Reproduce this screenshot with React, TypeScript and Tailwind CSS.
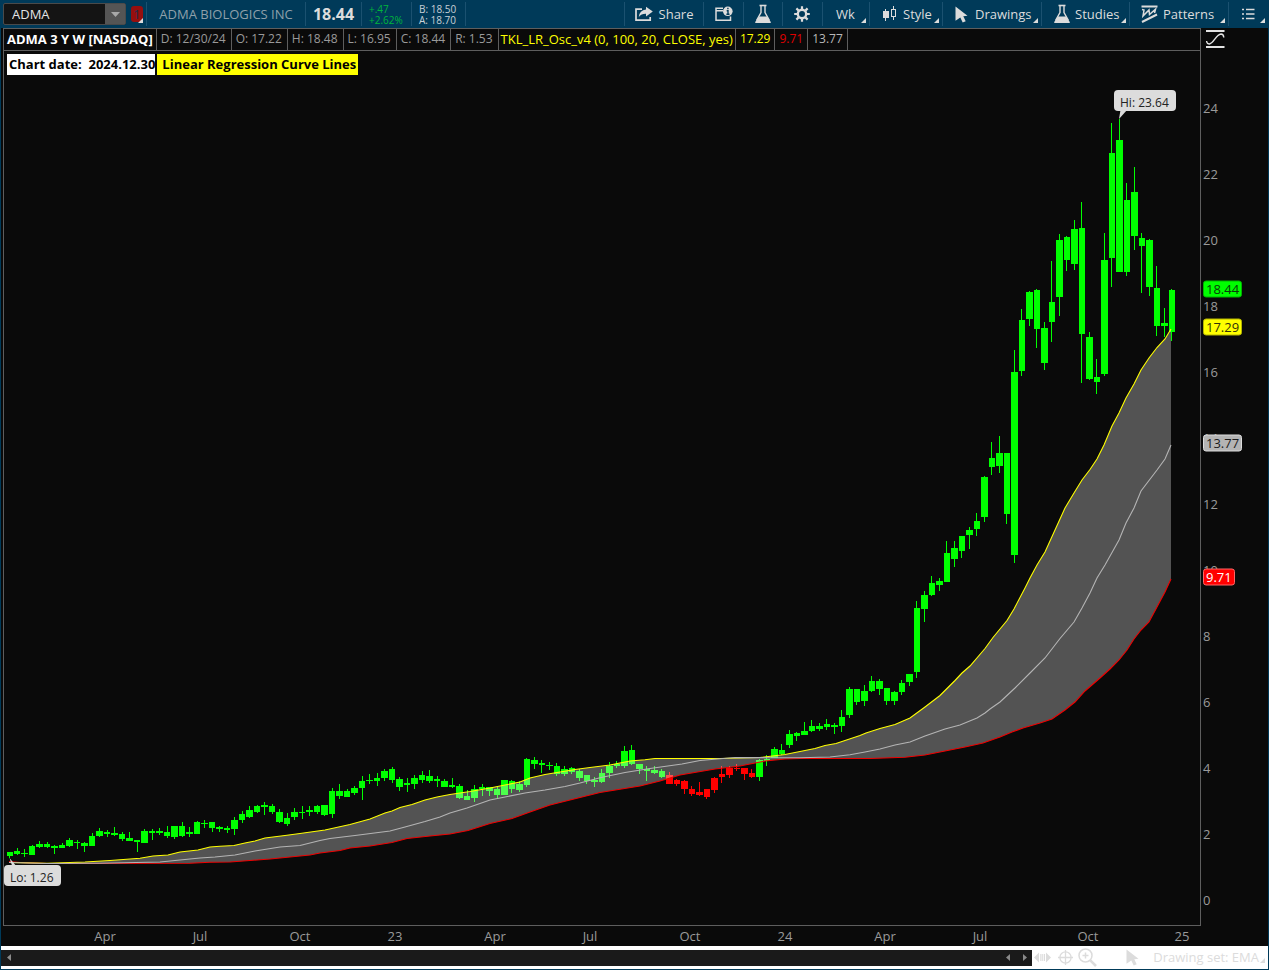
import type { ReactNode } from "react";

type Candle = [high: number, top: number, bottom: number, low: number];
type Point = [x: number, y: number];

/* Plot area in chart units: the svg scales it to whatever room it gets. */
const PLOT = { x: 4, y: 51, width: 1196, height: 874 };
const left = (x: number) => `${((x - PLOT.x) / PLOT.width) * 100}%`;
const top = (y: number) => `${((y - PLOT.y) / PLOT.height) * 100}%`;
const priceY = (price: number) => 900 - price * 33;

const candles: Candle[] = [
  [852, 852, 856, 858], [848, 851, 854, 855], [849, 853, 854, 857], [845, 846, 855, 855],
  [841, 844, 847, 848], [842, 844, 847, 848], [845, 846, 848, 854], [843, 845, 848, 848],
  [838, 840, 846, 847], [840, 842, 843, 849], [842, 843, 846, 852], [833, 836, 846, 846],
  [828, 831, 836, 837], [830, 832, 834, 837], [827, 833, 835, 836], [832, 834, 839, 841],
  [832, 838, 841, 841], [840, 840, 842, 852], [829, 831, 843, 843], [829, 831, 833, 840],
  [828, 831, 833, 835], [826, 832, 836, 838], [826, 826, 837, 839], [822, 826, 836, 837],
  [827, 832, 834, 837], [821, 822, 834, 834], [820, 823, 824, 828], [822, 822, 828, 832],
  [826, 827, 829, 832], [826, 828, 830, 833], [817, 820, 829, 835], [811, 814, 820, 823],
  [806, 810, 817, 818], [805, 806, 812, 813], [802, 805, 807, 815], [804, 806, 812, 814],
  [809, 812, 822, 823], [813, 818, 824, 826], [808, 812, 817, 820], [806, 812, 813, 819],
  [806, 810, 812, 816], [805, 806, 812, 814], [805, 805, 815, 816], [788, 791, 814, 818],
  [784, 791, 796, 799], [789, 791, 797, 797], [786, 788, 793, 795], [776, 781, 788, 800],
  [774, 780, 781, 784], [773, 778, 781, 786], [769, 771, 778, 781], [767, 769, 780, 783],
  [777, 779, 787, 791], [778, 783, 785, 792], [775, 778, 784, 789], [771, 775, 780, 783],
  [770, 776, 781, 783], [776, 779, 781, 787], [779, 781, 787, 787], [778, 785, 787, 788],
  [784, 786, 798, 799], [790, 796, 800, 800], [785, 789, 798, 802], [784, 787, 789, 796],
  [787, 787, 791, 796], [787, 789, 795, 798], [780, 780, 795, 795], [780, 781, 789, 793],
  [781, 784, 790, 792], [758, 759, 785, 787], [757, 760, 764, 769], [760, 763, 765, 773],
  [762, 765, 766, 770], [763, 766, 774, 776], [766, 769, 774, 776], [767, 768, 772, 774],
  [769, 771, 778, 781], [775, 775, 781, 784], [777, 780, 782, 787], [769, 773, 782, 783],
  [762, 766, 773, 778], [761, 764, 766, 768], [746, 751, 766, 768], [745, 750, 764, 765],
  [764, 764, 769, 774], [766, 769, 771, 781], [766, 770, 773, 774], [769, 771, 777, 778],
  [772, 775, 784, 784], [779, 780, 784, 786], [780, 781, 789, 794], [786, 789, 794, 796],
  [782, 792, 795, 796], [789, 789, 797, 799], [777, 778, 790, 793], [766, 774, 777, 783],
  [766, 768, 775, 778], [764, 768, 769, 771], [768, 768, 774, 780], [769, 773, 777, 778],
  [759, 760, 777, 781], [755, 759, 761, 766], [747, 749, 758, 758], [744, 750, 754, 755],
  [730, 734, 745, 748], [732, 733, 736, 741], [722, 731, 735, 735], [720, 726, 731, 732],
  [723, 726, 729, 731], [719, 724, 727, 730], [723, 725, 727, 734], [710, 717, 726, 732],
  [687, 689, 715, 718], [689, 689, 702, 705], [685, 691, 701, 706], [676, 681, 691, 692],
  [679, 681, 689, 695], [688, 688, 701, 705], [691, 692, 701, 705], [680, 683, 692, 695],
  [674, 674, 682, 686], [601, 608, 672, 678], [591, 595, 609, 622], [576, 583, 595, 596],
  [578, 581, 585, 591], [541, 553, 582, 582], [541, 548, 559, 567], [536, 536, 551, 558],
  [527, 530, 535, 549], [513, 521, 529, 536], [476, 477, 517, 522], [442, 458, 467, 475],
  [436, 453, 466, 473], [453, 453, 514, 524], [350, 372, 555, 563], [309, 320, 371, 376],
  [291, 292, 319, 326], [289, 290, 329, 348], [322, 328, 363, 370], [261, 302, 322, 342],
  [234, 240, 297, 316], [236, 237, 260, 271], [220, 229, 264, 270], [202, 228, 334, 383],
  [332, 337, 379, 380], [359, 377, 382, 394], [233, 260, 374, 376], [123, 153, 258, 287],
  [119, 140, 272, 272], [183, 200, 272, 276], [167, 192, 236, 250], [233, 238, 246, 293],
  [239, 240, 287, 296], [266, 288, 326, 336], [308, 323, 326, 337], [289, 290, 332, 341],
];
const isRed = (i: number) => i >= 88 && i <= 99;
const SPACING = 7.497;

const upper: Point[] = [
  [9, 862.5], [47, 863.3], [85, 862], [110, 860.5], [140, 858.3], [153, 856], [168, 855], [180, 852],
  [198, 850], [210, 847], [220, 846.3], [234, 845.5], [245, 843], [255, 841], [265, 838], [285, 835.5],
  [300, 833.5], [325, 830], [350, 824.5], [370, 819], [385, 813], [392, 811], [400, 807.5], [412, 804.5],
  [425, 800], [437, 797], [450, 794.5], [470, 791.5], [490, 788], [505, 785], [520, 782], [530, 778],
  [545, 774.5], [560, 772], [575, 769.5], [590, 767.5], [610, 765], [630, 761], [645, 759.7], [655, 758.5],
  [720, 758.5], [760, 757.5], [785, 754.5], [800, 751.5], [815, 748.5], [825, 745.5], [836, 743.5],
  [845, 740.5], [860, 735.5], [866, 733], [880, 728.5], [895, 724.5], [910, 718], [925, 707], [940, 695.5],
  [955, 680.5], [962, 673], [970, 666], [985, 648.5], [993, 637.5], [1007, 620.5], [1014, 609], [1025, 588],
  [1030, 578], [1037, 565], [1045, 552], [1055, 530], [1065, 508], [1074, 493], [1082, 480], [1090, 469.5],
  [1097, 459], [1104, 445], [1112, 426], [1119, 413], [1126, 398], [1134, 384], [1141, 370], [1149, 358],
  [1157, 347.5], [1165, 339], [1171, 329],
];
const middle: Point[] = [
  [9, 862.5], [47, 863.5], [100, 863.2], [160, 862], [185, 859.5], [200, 858], [215, 857], [235, 855],
  [255, 851], [280, 847], [300, 845.5], [320, 840.5], [330, 838.5], [355, 835.5], [390, 831], [405, 827],
  [425, 821.5], [440, 817], [450, 813], [467, 808], [480, 803.5], [490, 800], [505, 797], [525, 793],
  [545, 790], [565, 786.5], [580, 783], [600, 777.8], [625, 772.5], [650, 768.5], [682, 764], [700, 760.5],
  [720, 758.8], [735, 757.5], [770, 757.7], [800, 757.7], [830, 757], [850, 754.7], [865, 752], [880, 749],
  [895, 745], [910, 742], [925, 736], [945, 729], [960, 725], [977, 718], [985, 713], [990, 709],
  [1000, 702], [1015, 688], [1030, 673], [1045, 658], [1060, 638.5], [1074, 622], [1082, 608], [1090, 593],
  [1097, 578], [1105, 565], [1119, 540], [1126, 523], [1134, 508], [1141, 491], [1157, 470], [1165, 459],
  [1171, 445],
];
const lower: Point[] = [
  [9, 861.5], [20, 862.5], [47, 863.5], [190, 863.3], [210, 862.3], [230, 862], [250, 860.5], [270, 859],
  [285, 857.5], [310, 855], [320, 853], [340, 850.5], [350, 848], [370, 846], [392, 842.5], [407, 838.5],
  [430, 836], [450, 834], [468, 830.5], [490, 823.5], [512, 818.5], [530, 812], [550, 805], [570, 800],
  [600, 792.5], [640, 786], [660, 781], [680, 775], [715, 769], [740, 766], [765, 761], [785, 759],
  [800, 758.5], [870, 758.5], [905, 757.3], [925, 755], [945, 751], [965, 747], [983, 743], [1000, 737],
  [1012, 732], [1023, 728], [1040, 723], [1052, 719], [1065, 710], [1075, 702], [1085, 691], [1100, 678],
  [1110, 669], [1119, 660], [1127, 650], [1134, 639], [1141, 630], [1149, 622], [1157, 607], [1165, 592],
  [1171, 579],
];
const poly = (points: Point[]) => points.map((p) => p.join(",")).join(" ");
const band = poly([...upper, ...[...lower].reverse()]);

const months: [string, number][] = [
  ["Apr", 105], ["Jul", 200], ["Oct", 300], ["23", 395], ["Apr", 495], ["Jul", 590],
  ["Oct", 690], ["24", 785], ["Apr", 885], ["Jul", 980], ["Oct", 1088], ["25", 1182],
];
const ticks = [24, 22, 20, 18, 16, 14, 12, 10, 8, 6, 4, 2, 0];
const badges = [
  { value: "18.44", y: 289, style: "bg-[#00ff00] text-[#0a3a0a] border-[#00b400]" },
  { value: "17.29", y: 327, style: "bg-[#ffff00] text-[#33330a] border-[#b4b400]" },
  { value: "13.77", y: 443, style: "bg-[#b4b4b4] text-[#1c1c1c] border-[#dcdcdc]" },
  { value: "9.71", y: 577, style: "bg-[#ff0000] text-white border-[#ff6666]" },
];
const readings = [
  { text: "D: 12/30/24", style: "pl-1 pr-[5px] text-xs text-[#9a9a9a]" },
  { text: "O: 17.22", style: "pl-1 pr-[5px] text-xs text-[#9a9a9a]" },
  { text: "H: 18.48", style: "pl-1 pr-[5px] text-xs text-[#9a9a9a]" },
  { text: "L: 16.95", style: "pl-1 pr-[5px] text-xs text-[#9a9a9a]" },
  { text: "C: 18.44", style: "pl-1 pr-[5px] text-xs text-[#9a9a9a]" },
  { text: "R: 1.53", style: "pl-1 pr-[5px] text-xs text-[#9a9a9a]" },
  { text: "TKL_LR_Osc_v4 (0, 100, 20, CLOSE, yes)", style: "px-[2px] text-[#ffff00]" },
  { text: "17.29", style: "px-1 text-xs text-[#ffff00]" },
  { text: "9.71", style: "px-1 text-xs text-[#e00000]" },
  { text: "13.77", style: "px-1 text-xs text-[#b8b8b8]" },
];

function Corner({ className = "right-[3px] bottom-[3px]" }: { className?: string }) {
  return (
    <svg className={`absolute size-[5px] ${className}`} viewBox="0 0 5 5" fill="currentColor">
      <path d="M5 0V5H0Z" />
    </svg>
  );
}

function FlaskIcon() {
  return (
    <svg width="18" height="20" viewBox="0 0 18 20" fill="none" stroke="currentColor">
      <path d="M5.500 1.500H12.500" strokeWidth="1.600" />
      <path d="M7 2V8.500L2.500 16.500M11 2V8.500L15.500 16.500" strokeWidth="1.400" />
      <path d="M5 12.500H13L17 18.200Q17 19 16 19H2Q1 19 1 18.200Z" fill="currentColor" stroke="none" />
    </svg>
  );
}

function ShareIcon() {
  return (
    <svg width="18" height="16" viewBox="0 0 18 16" fill="none">
      <path d="M7 3.200H1V14.200H15.200V11" stroke="currentColor" strokeWidth="1.700" />
      <path d="M11 0.800L17.800 5.500L11 10.400V7.700Q6.500 7.500 3.800 10.900Q4.500 4.200 11 3.500Z" fill="currentColor" />
    </svg>
  );
}

function InfoCardIcon() {
  return (
    <svg width="18" height="16" viewBox="0 0 18 16" fill="none">
      <path d="M8 2.200H1V14.200H15.500V10.500M1 4.800H8" stroke="currentColor" strokeWidth="1.500" />
      <circle cx="12.800" cy="5.300" r="4.800" fill="currentColor" />
      <path d="M12.900 1.800V3.300M11.700 4.800H13V8.300M11.400 8.300H14.500" stroke="#003a59" strokeWidth="1.400" />
    </svg>
  );
}

function GearIcon() {
  return (
    <svg width="16" height="16" viewBox="0 0 16 16" fill="none" stroke="currentColor">
      <circle cx="8" cy="8" r="4.200" strokeWidth="2.400" />
      <path
        d="M8 0.200V3.200M8 12.800V15.800M0.200 8H3.200M12.800 8H15.800M2.400 2.400L4.600 4.600M11.400 11.400L13.600 13.600M2.400 13.600L4.600 11.400M11.400 4.600L13.600 2.400"
        strokeWidth="2.200"
      />
    </svg>
  );
}

function CandlesIcon() {
  return (
    <svg width="14" height="16" viewBox="0 0 14 16" shapeRendering="crispEdges">
      <path d="M0 5H6V12H0ZM2 3H3V15H2Z" fill="currentColor" />
      <path d="M8.500 3.500H12.500V10.500H8.500ZM10.500 0V3M10.500 11V14" fill="none" stroke="currentColor" />
    </svg>
  );
}

function PointerIcon() {
  return (
    <svg width="13" height="17" viewBox="0 0 13 17" fill="currentColor">
      <path d="M0.500 0.500L12.500 9.800L8.300 10.300L10.700 15.300L7.700 16.600L5.300 11.500L0.500 14.800Z" />
    </svg>
  );
}

function PatternsIcon() {
  return (
    <svg width="17" height="18" viewBox="0 0 17 18" fill="none" stroke="currentColor">
      <path d="M0.500 1.500H16.500M1 17L16 9.500" strokeWidth="2" />
      <path d="M1 4.500L3 5L2 11L8 5L8.500 9.500L14.500 4.300L13.500 8" strokeWidth="1.500" />
    </svg>
  );
}

function ListIcon() {
  return (
    <svg width="13" height="12" viewBox="0 0 13 12" fill="none" stroke="currentColor" strokeWidth="1.600">
      <path d="M0 1.500H2M4 1.500H12.500M0 6H2M4 6H12.500M0 10.500H2M4 10.500H12.500" />
    </svg>
  );
}

function ToolButton({
  width, label, icon, menu, showLabel, className = "justify-center gap-[6px]",
}: { width: string; label: string; icon?: ReactNode; menu?: boolean; showLabel?: boolean; className?: string }) {
  return (
    <button
      type="button"
      aria-label={label}
      className={`relative flex h-full shrink-0 items-center border-l border-[#1b5170] ${width} ${className}`}
    >
      {icon}
      {showLabel && <span>{label}</span>}
      {menu && <Corner />}
    </button>
  );
}

function Toolbar() {
  return (
    <header className="flex h-[28px] items-stretch bg-[#003a59] py-[2px] text-[#dcdcdc]">
      <div className="relative flex w-[145px] shrink-0 items-center pl-[2px]">
        <div className="flex h-[22px] w-[123px] items-center rounded-[2px] border border-[#4a4a4a] bg-[#141414]">
          <input
            aria-label="Symbol"
            defaultValue="ADMA"
            className="w-0 min-w-0 flex-1 bg-transparent pl-2 text-[#e4e4e4] outline-none"
          />
          <button type="button" aria-label="Choose symbol" className="flex h-full w-5 items-center justify-center bg-[#555555] text-[#a8a8a8]">
            <svg width="9" height="5" viewBox="0 0 9 5" fill="currentColor"><path d="M0 0H9L4.500 5Z" /></svg>
          </button>
        </div>
        <span className="ml-[5px] flex h-[16px] w-[12px] items-center justify-center rounded-[3px] bg-[#960f0f] text-[#1c2c4c]">1</span>
        <Corner className="right-[3px] bottom-[3px]" />
      </div>
      <div className="flex w-[159px] shrink-0 items-center justify-center whitespace-nowrap border-l border-[#1b5170] text-[#8fa0aa]">
        ADMA BIOLOGICS INC
      </div>
      <div className="flex w-[56px] shrink-0 items-center justify-center border-l border-[#1b5170] text-base font-bold">18.44</div>
      <div className="flex w-[50px] shrink-0 flex-col justify-center border-l border-[#1b5170] pt-[2px] pl-[7px] text-[10px] leading-[11px] text-[#00b43c]">
        <span>+.47</span>
        <span>+2.62%</span>
      </div>
      <div className="flex w-[54px] shrink-0 flex-col justify-center border-l border-[#1b5170] pt-[2px] pl-[7px] text-[10px] leading-[11px] text-[#c8d0d6]">
        <span>B: 18.50</span>
        <span>A: 18.70</span>
      </div>
      <div className="flex-1 border-l border-[#1b5170]" />
      <ToolButton width="w-[79px]" label="Share" icon={<ShareIcon />} showLabel />
      <ToolButton width="w-[40px]" label="Symbol info" icon={<InfoCardIcon />} />
      <ToolButton width="w-[39px]" label="Edit studies" icon={<FlaskIcon />} />
      <ToolButton width="w-[40px]" label="Chart settings" icon={<GearIcon />} className="justify-center pr-px" />
      <ToolButton width="w-[47px]" label="Wk" showLabel menu className="justify-center pr-px" />
      <ToolButton width="w-[73px]" label="Style" icon={<CandlesIcon />} showLabel menu className="gap-[6px] pl-[13px]" />
      <ToolButton width="w-[99px]" label="Drawings" icon={<PointerIcon />} showLabel menu className="gap-[7px] pl-3" />
      <ToolButton width="w-[88px]" label="Studies" icon={<FlaskIcon />} showLabel menu className="gap-1 pl-[11px]" />
      <ToolButton width="w-[99px]" label="Patterns" icon={<PatternsIcon />} showLabel menu className="gap-[5px] pl-[11px]" />
      <ToolButton width="w-[40px]" label="Menu" icon={<ListIcon />} menu />
    </header>
  );
}

function Readings() {
  return (
    <div className="flex h-[23px] shrink-0 items-stretch overflow-hidden whitespace-nowrap border-y border-[#5e5e5e]">
      <h1 className="flex items-center border-r border-[#5e5e5e] px-[3px] pb-px font-bold text-white">ADMA 3 Y W [NASDAQ]</h1>
      {readings.map(({ text, style }) => (
        <span key={text} className={`flex items-center border-r border-[#5e5e5e] pb-px ${style}`}>{text}</span>
      ))}
    </div>
  );
}

function Callout({ x, y, children }: { x: number; y: number; children: ReactNode }) {
  return (
    <div
      className="absolute whitespace-nowrap rounded bg-[#dcdcdc] pt-1 pr-[7px] pl-[6px] text-xs leading-[17px] text-[#222222]"
      style={{ left: left(x), top: top(y) }}
    >
      {children}
    </div>
  );
}

function Plot() {
  return (
    <div className="relative min-h-[480px] flex-1 border-b border-[#5e5e5e]">
      <svg
        className="absolute inset-0 size-full"
        viewBox={`${PLOT.x} ${PLOT.y} ${PLOT.width} ${PLOT.height}`}
        preserveAspectRatio="none"
      >
        <g shapeRendering="crispEdges">
          {candles.map(([high, bodyTop, bodyBottom, low], i) => {
            const x = Math.floor(7 + i * SPACING);
            const next = Math.floor(7 + (i + 1) * SPACING);
            return (
              <g key={i} fill={isRed(i) ? "#ff0000" : "#00ff00"}>
                <rect x={x} y={bodyTop} width={next - x - 1} height={bodyBottom - bodyTop} />
                <rect x={Math.floor(9.7 + i * SPACING)} y={high} width={1} height={low - high} />
              </g>
            );
          })}
        </g>
        <polygon points={band} fill="#ffffff" fillOpacity="0.3" />
        <g fill="none" strokeWidth="1.100">
          <polyline points={poly(lower)} stroke="#f00000" />
          <polyline points={poly(upper)} stroke="#ffff00" />
          <polyline points={poly(middle)} stroke="#b4b4b4" />
        </g>
        <path d="M1119 119L1120.500 110H1127ZM9.500 858L12.500 867H17Z" fill="#dcdcdc" />
      </svg>
      <div className="relative flex gap-[2px] pt-[3px] pl-[3px] font-bold leading-[21px] text-black">
        <span className="whitespace-pre bg-white pl-[2px]">Chart date:  2024.12.30</span>
        <span className="bg-[#ffff00] pr-[2px] pl-[5px]">Linear Regression Curve Lines</span>
      </div>
      <Callout x={1114} y={90}>Hi: 23.64</Callout>
      <Callout x={4} y={865}>Lo: 1.26</Callout>
    </div>
  );
}

function PriceAxis() {
  return (
    <aside className="flex w-[67px] shrink-0 flex-col pb-5 text-[#9a9a9a]">
      <button type="button" aria-label="Fit studies" className="mb-px flex h-[22px] items-center pl-[5px] text-[#e4e4e4]">
        <svg width="19" height="18" viewBox="0 0 19 18" fill="none" stroke="currentColor">
          <path d="M0 1H18.500M0 17H18.500" strokeWidth="2" />
          <path d="M0.500 11Q1 14.300 3.500 14C8 13 10 4.500 15 4Q17.500 4 17.800 7.500" strokeWidth="1.400" />
        </svg>
      </button>
      <div className="relative flex-1 border-b border-transparent leading-4">
        {ticks.map((tick) => (
          <span key={tick} className="absolute left-[2px] -translate-y-1/2" style={{ top: top(priceY(tick)) }}>{tick}</span>
        ))}
        {badges.map(({ value, y, style }) => (
          <span
            key={value}
            className={`absolute left-[2px] -translate-y-1/2 rounded-[3px] border px-[2px] leading-[15px] ${style}`}
            style={{ top: top(y) }}
          >
            {value}
          </span>
        ))}
      </div>
    </aside>
  );
}

function TimeAxis() {
  return (
    <div className="relative mx-px h-5 shrink-0 leading-5 text-[#9a9a9a]">
      {months.map(([name, x]) => (
        <span key={x} className="absolute top-0 -translate-x-1/2" style={{ left: left(x) }}>{name}</span>
      ))}
    </div>
  );
}

function Footer() {
  return (
    <footer className="flex h-[23px] items-center bg-white text-[#dcdcdc]">
      <div className="flex h-4 flex-1 items-center bg-[#1a1a1a] text-[#8a8a8a]">
        <button type="button" aria-label="Scroll to start" className="pl-[6px]">
          <svg width="4" height="7" viewBox="0 0 4 7" fill="currentColor"><path d="M4 0V7L0 3.500Z" /></svg>
        </button>
        <button type="button" aria-label="Scroll left" className="ml-auto">
          <svg width="4" height="7" viewBox="0 0 4 7" fill="currentColor"><path d="M4 0V7L0 3.500Z" /></svg>
        </button>
        <button type="button" aria-label="Scroll right" className="pr-[5px] pl-[13px]">
          <svg width="4" height="7" viewBox="0 0 4 7" fill="currentColor"><path d="M0 0V7L4 3.500Z" /></svg>
        </button>
      </div>
      <div className="flex h-full w-[236px] shrink-0 items-center pb-px">
        <button type="button" aria-label="Pan" className="ml-[2px]">
          <svg width="17" height="11" viewBox="0 0 17 11" fill="currentColor">
            <path d="M5 0.500V10.500L0 5.500ZM12 0.500V10.500L17 5.500ZM6.300 2H7.500V9H6.300ZM8.200 2H9.200V9H8.200ZM9.900 2H11V9H9.900Z" />
          </svg>
        </button>
        <button type="button" aria-label="Crosshair" className="ml-[7px]">
          <svg width="15" height="15" viewBox="0 0 15 15" fill="none" stroke="currentColor" strokeWidth="1.300">
            <circle cx="7.500" cy="7.500" r="5.600" />
            <path d="M7.500 0V15M0 7.500H15" />
          </svg>
        </button>
        <button type="button" aria-label="Zoom in" className="ml-[5px]">
          <svg width="19" height="19" viewBox="0 0 19 19" fill="none" stroke="currentColor">
            <circle cx="7.500" cy="7.500" r="6.500" strokeWidth="1.500" />
            <path d="M7.500 4.500V10.500M4.500 7.500H10.500" strokeWidth="1.500" />
            <path d="M12.300 12.300L18 18" strokeWidth="2.600" />
          </svg>
        </button>
        <button type="button" aria-label="Pointer" className="ml-[29px]"><PointerIcon /></button>
        <button type="button" className="relative ml-auto flex h-full items-center whitespace-nowrap pr-[9px]">
          Drawing set: EMA
          <Corner className="right-[3px] bottom-[5px]" />
        </button>
      </div>
    </footer>
  );
}

export default function App() {
  return (
    <div className="flex min-h-screen flex-col bg-[#003a59] px-px pb-px font-['Open_Sans','Noto_Sans',sans-serif] text-[13px] leading-4">
      <Toolbar />
      <main className="flex flex-1 bg-[#0a0a0a] pl-[2px]">
        <section className="flex min-w-0 flex-1 flex-col">
          <div className="flex flex-1 flex-col border-x border-[#5e5e5e]">
            <Readings />
            <Plot />
          </div>
          <TimeAxis />
        </section>
        <PriceAxis />
      </main>
      <Footer />
    </div>
  );
}
